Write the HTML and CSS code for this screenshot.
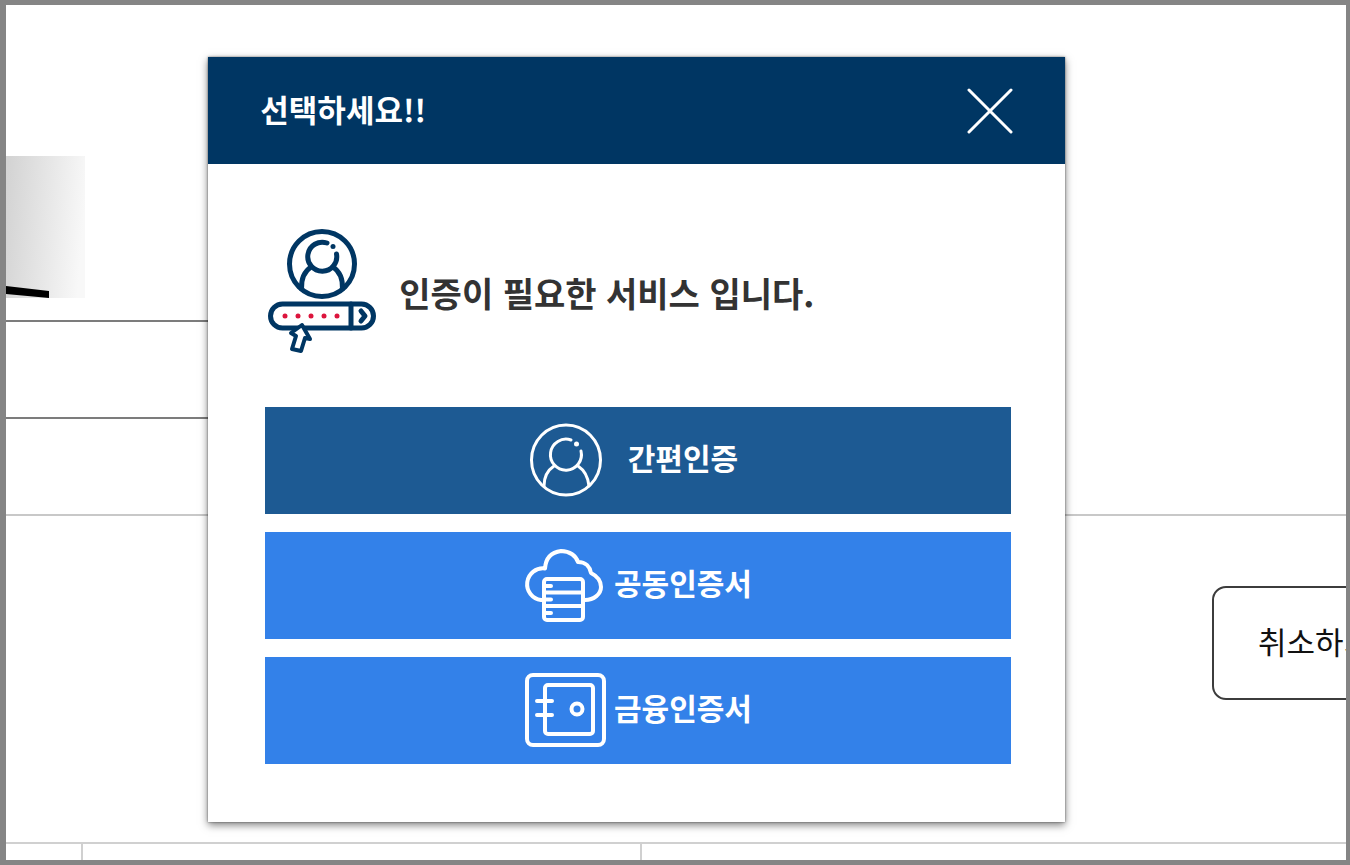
FILE: index.html
```html
<!DOCTYPE html>
<html lang="ko">
<head>
    <meta charset="UTF-8">
    <meta name="viewport" content="width=device-width, initial-scale=1.0">
    <title>인증 선택</title>
    <link rel="stylesheet" href="styles.css">
</head>
<body>
    <div class="page">
        <!-- Page content behind the dialog -->
        <div class="background">
            <svg class="photo" viewBox="0 0 79 142" aria-hidden="true">
                <defs>
                    <linearGradient id="shade" x1="0" y1="0.2" x2="1" y2="0.35">
                        <stop offset="0" stop-color="#d3d3d3"/>
                        <stop offset="1" stop-color="#f8f8f8"/>
                    </linearGradient>
                </defs>
                <rect width="79" height="142" fill="url(#shade)"/>
                <path d="M0 130L43 135V142L0 138Z" fill="#000"/>
            </svg>
            <div class="row row-short"></div>
            <div class="row row-short"></div>
            <div class="row row-wide">
                <button class="cancel-btn" type="button">취소하기</button>
            </div>
            <div class="cells">
                <div class="cell"></div>
                <div class="cell"></div>
                <div class="cell"></div>
            </div>
        </div>

        <!-- Dialog -->
        <div class="modal" role="dialog" aria-labelledby="modalTitle">
            <div class="modal-header">
                <h1 class="modal-title" id="modalTitle">선택하세요!!</h1>
                <button class="close-btn" type="button" aria-label="닫기">
                    <svg width="46" height="46" viewBox="0 0 46 46">
                        <path d="M2 2L44 44M44 2L2 44"/>
                    </svg>
                </button>
            </div>
            <div class="modal-body">
                <div class="notice">
                    <svg class="notice-icon" width="110" height="128" viewBox="0 0 110 128" aria-hidden="true">
                        <circle cx="55" cy="37" r="32.500"/>
                        <path d="M60 16A14.500 14.500 0 1 0 69.500 27"/>
                        <path d="M34.500 62C34 51 38 44 44 40M66 40C72 44 76 51 75.500 62"/>
                        <rect x="3.500" y="77" width="103" height="24" rx="12"/>
                        <path d="M84 77V101"/>
                        <path d="M94 84L98 89L94 94"/>
                        <path class="pointer" d="M35 98L24 106L29 109L25 122L34 124L38 111L43 112Z"/>
                        <circle class="spot" cx="66" cy="19.500" r="2.500"/>
                        <g class="dots">
                            <circle cx="18" cy="89" r="2.500"/>
                            <circle cx="31" cy="89" r="2.500"/>
                            <circle cx="44" cy="89" r="2.500"/>
                            <circle cx="57" cy="89" r="2.500"/>
                            <circle cx="70" cy="89" r="2.500"/>
                        </g>
                    </svg>
                    <p class="notice-text">인증이 필요한 서비스 입니다.</p>
                </div>

                <div class="menu">
                    <button class="menu-btn simple-btn" type="button">
                        <svg width="76" height="76" viewBox="0 0 76 76" aria-hidden="true">
                            <ellipse cx="38" cy="37" rx="34.500" ry="35"/>
                            <path d="M43 17A15.500 15.500 0 1 0 53 28"/>
                            <path d="M16 63C16 53 20 47 26 43M50 43C56 47 60 53 61 63"/>
                            <circle class="dot" cx="48.500" cy="21" r="2.500"/>
                        </svg>
                        <span>간편인증</span>
                    </button>
                    <button class="menu-btn" type="button">
                        <svg width="82" height="76" viewBox="0 0 82 76" aria-hidden="true">
                            <path d="M20 52H17A15.500 15.500 0 0 1 21 20.500Q22 5 37 3C46 3 52 8 54 14C62 14 66 19 67 25C73 28 77 33 77 39C77 46 70 52 61 52"/>
                            <rect x="20" y="31" width="39" height="41" rx="3"/>
                            <path d="M20 44.500H59M20 58H59M20 38H27M20 51.500H27M20 65H27"/>
                        </svg>
                        <span>공동인증서</span>
                    </button>
                    <button class="menu-btn" type="button">
                        <svg width="82" height="76" viewBox="0 0 82 76" aria-hidden="true">
                            <rect x="3" y="2" width="77" height="70" rx="6"/>
                            <rect x="21" y="12" width="48" height="49" rx="3"/>
                            <path d="M13 28H28M13 42H28"/>
                            <circle cx="53" cy="36" r="5.500"/>
                        </svg>
                        <span>금융인증서</span>
                    </button>
                </div>
            </div>
        </div>
    </div>
</body>
</html>
```
FILE: styles.css
```css
* {
    margin: 0;
    padding: 0;
    box-sizing: border-box;
}

body {
    font-family: "Noto Sans CJK KR", sans-serif;
    background-color: #fff;
}

button {
    font-family: inherit;
    cursor: pointer;
}

svg {
    display: block;
    flex-shrink: 0;
}

.page {
    position: relative;
    height: 100vh;
    overflow: hidden;
    border: solid #858585;
    border-width: 5px 4px 5px 6px;
}

.background {
    display: flex;
    flex-direction: column;
    height: 100%;
    padding-top: 151px;
}

.photo {
    width: 79px;
    height: 142px;
    margin-bottom: 22px;
}

.row-short {
    width: 50%;
    height: 97px;
    border-top: 2px solid #7c7c7c;
}

.row-wide {
    flex: 1;
    padding: 70px 0 0 90%;
    border-top: 2px solid #c8c8c8;
}

.cancel-btn {
    height: 114px;
    padding: 0 44px 6px;
    border: 2px solid #3c3c3c;
    border-radius: 14px;
    background-color: #fff;
    color: #111;
    font-size: 31px;
    white-space: nowrap;
}

.cells {
    display: grid;
    grid-template-columns: 77px 559px 1fr;
    height: 18px;
    border-top: 2px solid #d0d0d0;
}

.cell {
    border-right: 2px solid #d0d0d0;
}

.cell:last-child {
    border-right: none;
}

/* Dialog */
.modal {
    position: absolute;
    top: 52px;
    left: 15.1%;
    width: 63.9%;
    background-color: #fff;
    box-shadow: 0 3px 8px rgba(0, 0, 0, 0.5), 0 0 2px rgba(0, 0, 0, 0.5);
}

.modal-header {
    display: flex;
    align-items: center;
    justify-content: space-between;
    height: 107px;
    padding: 0 52px;
    background-color: #003663;
}

.modal-title {
    padding-bottom: 4px;
    color: #fff;
    font-size: 31px;
    font-weight: bold;
}

.close-btn {
    border: none;
    background: none;
}

.close-btn svg {
    fill: none;
    stroke: #fff;
    stroke-width: 3;
    stroke-linecap: round;
}

.modal-body {
    padding: 63px 54px 58px 57px;
}

.notice {
    display: flex;
    align-items: center;
    gap: 22px;
    margin-bottom: 52px;
    padding-left: 2px;
}

.notice-icon {
    fill: none;
    stroke: #003663;
    stroke-width: 5;
    stroke-linecap: round;
    stroke-linejoin: round;
}

.notice-icon .pointer {
    fill: #fff;
    stroke-width: 4;
}

.notice-icon .spot {
    fill: #003663;
    stroke: none;
}

.notice-icon .dots {
    fill: #dc143c;
    stroke: none;
}

.notice-text {
    padding-top: 2px;
    color: #333;
    font-size: 34px;
    font-weight: bold;
}

.menu {
    display: flex;
    flex-direction: column;
    gap: 18px;
}

.menu-btn {
    display: flex;
    align-items: center;
    justify-content: center;
    gap: 8px;
    height: 107px;
    border: none;
    background-color: #3381e9;
    color: #fff;
    font-size: 30px;
    font-weight: bold;
}

.menu-btn span {
    padding-bottom: 8px;
}

.simple-btn {
    gap: 24px;
    padding-right: 10px;
    background-color: #1d5a93;
}

.menu-btn svg {
    fill: none;
    stroke: #fff;
    stroke-width: 4;
    stroke-linecap: round;
    stroke-linejoin: round;
}

.simple-btn svg {
    stroke-width: 3;
}

.menu-btn .dot {
    fill: #fff;
    stroke: none;
}
```
